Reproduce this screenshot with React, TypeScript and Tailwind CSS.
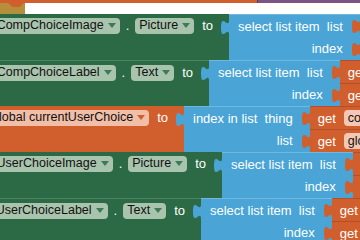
import React from "react";

function Arrow({ orange }: { orange?: boolean }) {
  return (
    <svg width="8" height="5" viewBox="0 0 8 5" className="shrink-0">
      <path d="M0 0 H8 L4 5 Z" fill={orange ? "#d05f2d" : "#3d7a55"} />
    </svg>
  );
}

function Pill({ text, orange }: { text: string; orange?: boolean }) {
  return (
    <span
      className={
        orange
          ? "flex h-[16px] shrink-0 items-center gap-[4px] whitespace-nowrap rounded-[4px] bg-[#f1bea7] pl-[4px] pr-[4px] text-[12.5px] text-[#111111]"
          : "flex h-[16px] shrink-0 items-center gap-[4px] whitespace-nowrap rounded-[4px] bg-[#a9c4ad] pl-[4px] pr-[4px] text-[12.5px] text-[#111111]"
      }
    >
      {text}
      <Arrow orange={orange} />
    </span>
  );
}

function Tab({ color, className }: { color: string; className: string }) {
  return (
    <svg width="8" height="15" viewBox="0 0 8 15" className={className}>
      <path d="M8 0 C8 10 0 -8 0 7.5 C0 23 8 5 8 15 Z" fill={color} />
    </svg>
  );
}

function Get({ text, pill }: { text?: string; pill?: string }) {
  return (
    <div className="relative flex h-[22px] shrink-0 items-center gap-[8px] whitespace-nowrap bg-[#d05f2d] pl-[8px] text-white">
      <Tab color="#d05f2d" className="absolute left-[-8px] top-[4px]" />
      {text}
      {pill && (
        <span className="flex h-[16px] items-center rounded-[4px] bg-[#f4c8b4] px-[4px] text-[12.5px] text-[#111111]">
          {pill}
        </span>
      )}
    </div>
  );
}

type RowProps = {
  leftCls: string;
  left: React.ReactNode;
  line1: string;
  line2: string;
  get1?: { text?: string; pill?: string };
  get2?: { text?: string; pill?: string };
};

function Row({ leftCls, left, line1, line2, get1, get2 }: RowProps) {
  return (
    <div className="flex h-[46px] shrink-0">
      <div className={leftCls}>
        <div className="flex h-[23px] items-center justify-end gap-[6px] pr-[16px] text-white">
          {left}
        </div>
      </div>
      <div className="relative flex h-full shrink-0 flex-col border-t border-[#6fb8df] bg-[#4aa4d6] pl-[9px] pr-[17px] text-white">
        <Tab color="#4aa4d6" className="absolute left-[-8px] top-[5px]" />
        <div className="flex h-[22px] items-center justify-end whitespace-pre">{line1}</div>
        <div className="flex h-[23px] items-center justify-end">{line2}</div>
      </div>
      <div className="flex min-w-0 flex-1 flex-col gap-[1px] bg-[#b2502a] pt-[1px]">
        <Get {...(get1 || {})} />
        <Get {...(get2 || {})} />
      </div>
    </div>
  );
}

export default function App() {
  return (
    <div
      className="flex h-[240px] w-[360px] flex-col overflow-hidden bg-white text-[13px] leading-none"
      style={{ fontFamily: '"Liberation Sans", Arial, sans-serif' }}
    >
      <div className="flex h-[3px] shrink-0">
        <div className="w-[257px] bg-[#d05f2d]" />
        <div className="w-[1px] bg-[#5b3a63]" />
        <div className="flex-1 bg-[#7c5385]" />
      </div>
      <div className="relative flex h-[11px] shrink-0">
        <div className="w-[25px] bg-[#b58f3b]" />
        <div className="flex-1 bg-white" />
        <svg className="absolute left-[7px] top-0" width="18" height="4" viewBox="0 0 18 4">
          <path d="M0 0 C3 0 4 4 6 4 H12 C14 4 15 0 18 0 Z" fill="#d05f2d" />
        </svg>
      </div>

      <Row
        leftCls="flex h-full w-[229px] shrink-0 flex-col overflow-hidden bg-[#2c6a45]"
        left={
          <>
            <Pill text="CompChoiceImage" />
            <span>.</span>
            <Pill text="Picture" />
            <span className="ml-[2px]">to</span>
          </>
        }
        line1="select list item  list"
        line2="index"
      />
      <Row
        leftCls="flex h-full w-[209px] shrink-0 flex-col overflow-hidden border-t border-[#4a8462] bg-[#2c6a45]"
        left={
          <>
            <Pill text="CompChoiceLabel" />
            <span>.</span>
            <Pill text="Text" />
            <span className="ml-[2px]">to</span>
          </>
        }
        line1="select list item  list"
        line2="index"
        get1={{ text: "get" }}
        get2={{ text: "get" }}
      />
      <Row
        leftCls="flex h-full w-[184px] shrink-0 flex-col overflow-hidden bg-[#d05f2d]"
        left={
          <>
            <Pill text="global currentUserChoice" orange />
            <span className="ml-[2px]">to</span>
          </>
        }
        line1="index in list  thing"
        line2="list"
        get1={{ text: "get", pill: "computerChoice" }}
        get2={{ text: "get", pill: "global choices" }}
      />
      <Row
        leftCls="flex h-full w-[222px] shrink-0 flex-col overflow-hidden bg-[#2c6a45]"
        left={
          <>
            <Pill text="UserChoiceImage" />
            <span>.</span>
            <Pill text="Picture" />
            <span className="ml-[2px]">to</span>
          </>
        }
        line1="select list item  list"
        line2="index"
      />
      <Row
        leftCls="flex h-full w-[201px] shrink-0 flex-col overflow-hidden border-t border-[#4a8462] bg-[#2c6a45]"
        left={
          <>
            <Pill text="UserChoiceLabel" />
            <span>.</span>
            <Pill text="Text" />
            <span className="ml-[2px]">to</span>
          </>
        }
        line1="select list item  list"
        line2="index"
        get1={{ text: "get" }}
        get2={{ text: "get" }}
      />
    </div>
  );
}
